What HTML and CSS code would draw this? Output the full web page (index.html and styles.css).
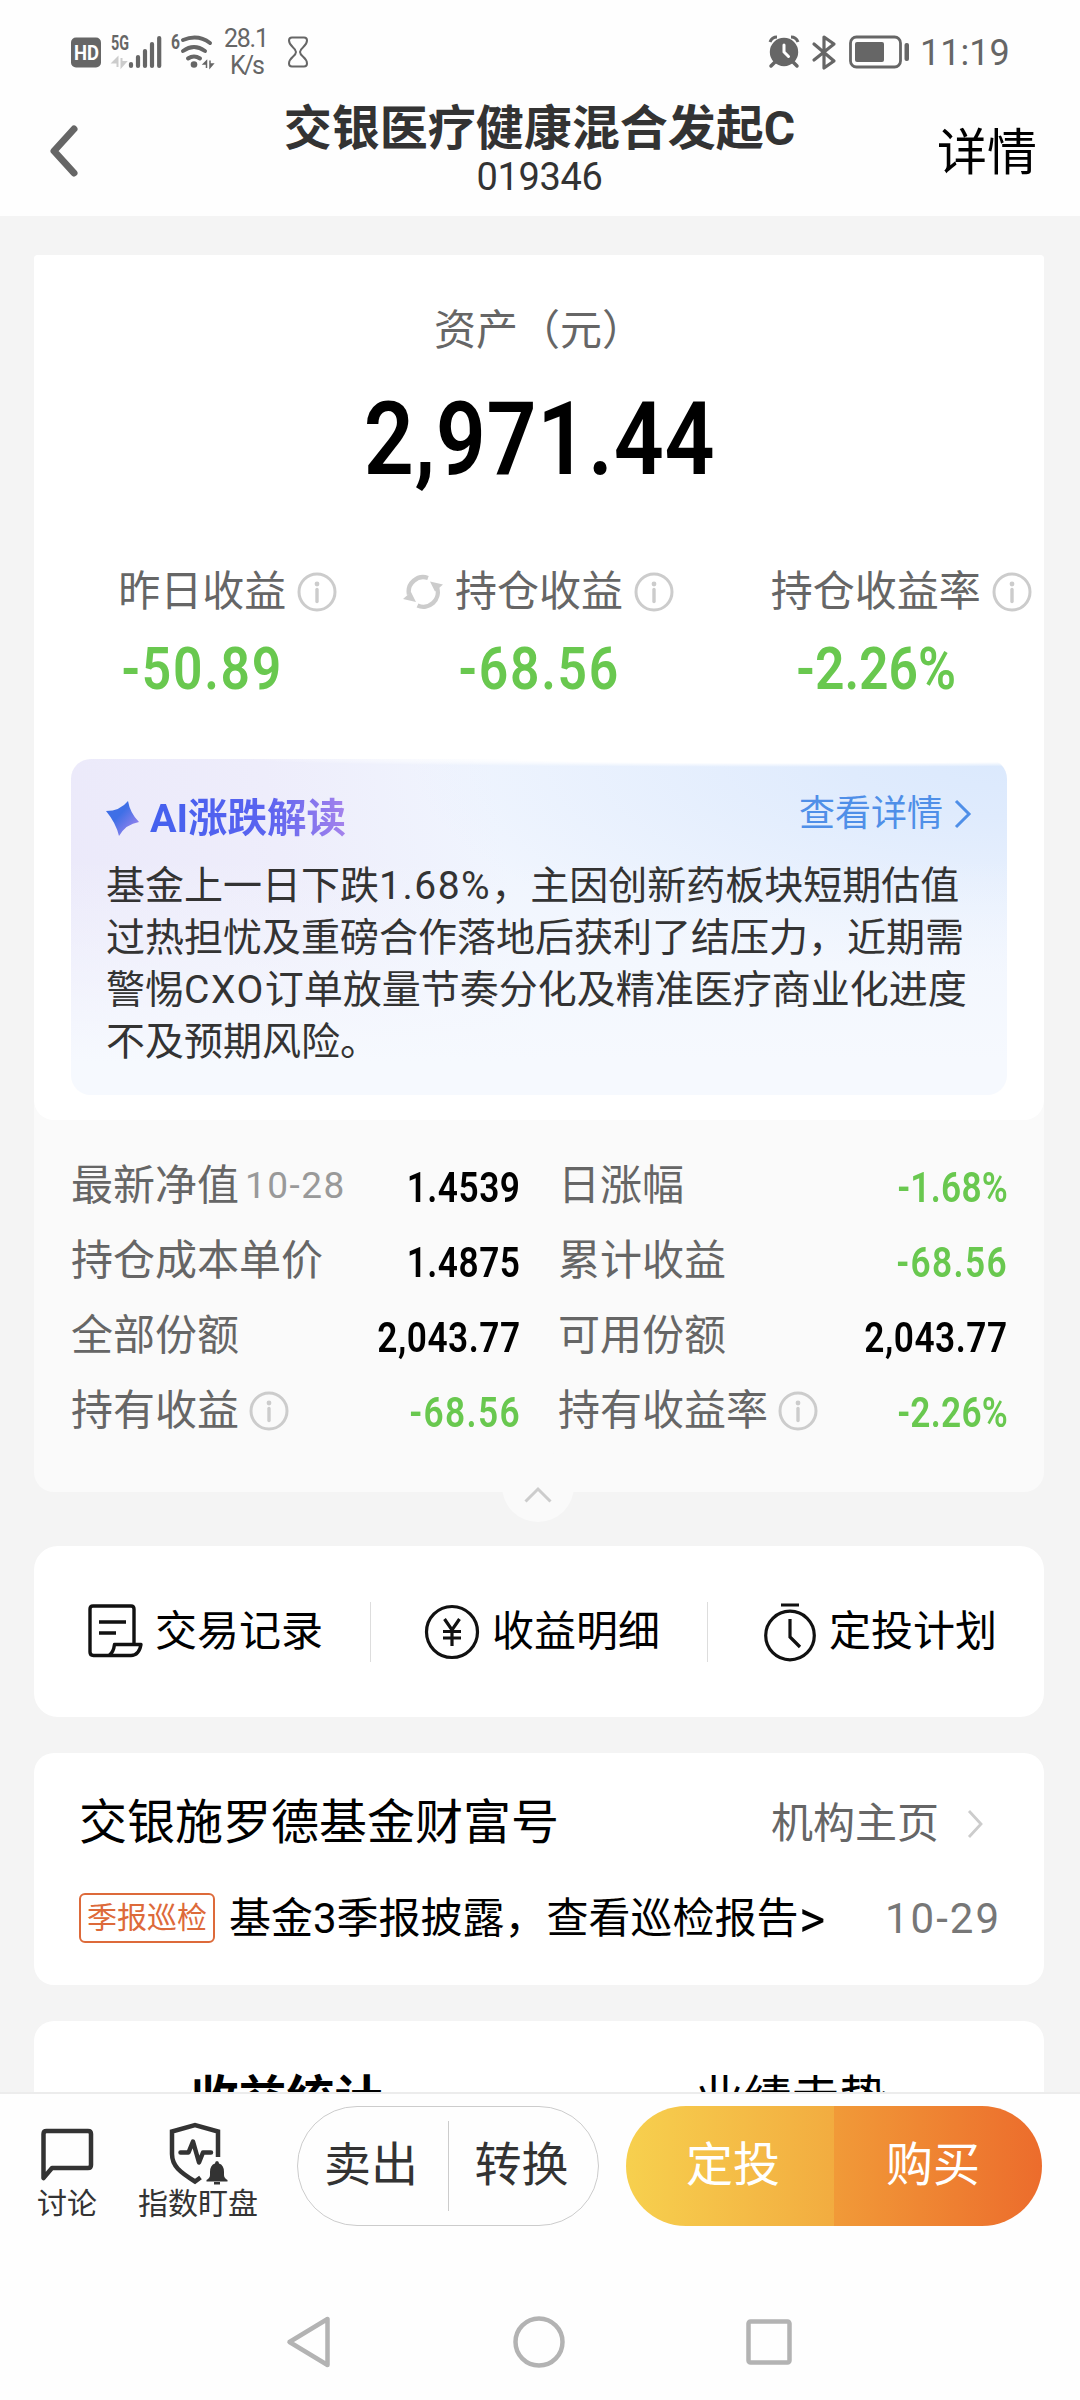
FILE: index.html
```html
<!DOCTYPE html>
<html lang="zh-CN">
<head>
    <meta charset="UTF-8">
    <meta name="viewport" content="width=device-width, initial-scale=1.0">
    <title>交银医疗健康混合发起C</title>
    <link rel="stylesheet" href="styles.css">
</head>
<body>

<svg class="sprite" width="0" height="0">
    <symbol id="info" viewBox="0 0 40 40">
        <circle cx="20" cy="20" r="18" fill="none" stroke="#ccc" stroke-width="3"/>
        <circle cx="20" cy="12" r="2.4" fill="#ccc"/>
        <path d="M20 17.500v12" stroke="#ccc" stroke-width="3.400" stroke-linecap="round"/>
    </symbol>
</svg>

<div class="status">
    <svg class="status-left" width="250" height="52" viewBox="66 28 250 52">
        <rect x="71" y="39.500" width="30" height="30" rx="5" fill="#666"/>
        <text x="74" y="61.500" class="hd" textLength="25" lengthAdjust="spacingAndGlyphs">HD</text>
        <text x="111" y="52" class="net" textLength="18" lengthAdjust="spacingAndGlyphs">5G</text>
        <path d="M117.500 69V60L113 64.500h4M121.500 60v8.500l4-4.500h-4" fill="#ccc" stroke="#ccc" stroke-width="2"/>
        <path d="M131 66v2M138 59v9M145 53v15M152 46v22M159.200 40v28" stroke="#666" stroke-width="4.200" stroke-linecap="round"/>
        <text x="171" y="50.500" class="net" textLength="9" lengthAdjust="spacingAndGlyphs">6</text>
        <path d="M183 42q15-6 27 3M183 53q11-8 22 0M188 60.500q6-4 12 0" fill="none" stroke="#666" stroke-width="4" stroke-linecap="round"/>
        <circle cx="194" cy="66.500" r="3.300" fill="#666"/>
        <path d="M206.500 70v-7l-3 3h3M210 62.500v7l3-3.500h-3" fill="#666" stroke="#666" stroke-width="1.500"/>
        <text x="224" y="49" class="speed" textLength="45">28.1</text>
        <text x="230" y="76" class="speed" textLength="35">K/s</text>
        <path d="M292 39.500h12q3 0 3 3c0 6-7 7-7 11.500s7 5.500 7 11.500q0 3-3 3h-12q-3 0-3-3c0-6 7-7 7-11.500s-7-5.500-7-11.500q0-3 3-3z" fill="none" stroke="#666" stroke-width="2"/>
    </svg>
    <svg class="status-right" width="142" height="40" viewBox="768 34 142 40">
        <circle cx="784" cy="54" r="14.200" fill="#666"/>
        <path d="M770 44q2-5 7-5M798 44q-2-5-7-5" fill="none" stroke="#666" stroke-width="3"/>
        <path d="M775 64l-4 4M793 64l4 4" stroke="#666" stroke-width="3.500" stroke-linecap="round"/>
        <path d="M784 47v7l4.500 4.500" fill="none" stroke="#fff" stroke-width="3" stroke-linecap="round"/>
        <path d="M814 46l20 17-10 7V39l10 7-20 16" fill="none" stroke="#666" stroke-width="3.200" stroke-linecap="round" stroke-linejoin="round"/>
        <rect x="850.500" y="39" width="50" height="30" rx="6" fill="none" stroke="#666" stroke-width="2.800"/>
        <rect x="855" y="44" width="29" height="20" rx="2" fill="#666"/>
        <rect x="904.500" y="45" width="4.500" height="18" rx="2" fill="#666"/>
    </svg>
    <span class="clock">11:19</span>
</div>

<header>
    <svg class="back" width="30" height="54" viewBox="0 0 30 54"><path d="M25 5L5 27 25 49" fill="none" stroke="#666" stroke-width="7" stroke-linecap="round" stroke-linejoin="round"/></svg>
    <div class="title">
        <h1>交银医疗健康混合发起C</h1>
        <p>019346</p>
    </div>
    <a class="more">详情</a>
</header>

<main>
    <section class="asset">
        <div class="asset-top">
            <p class="asset-label">资产（元）</p>
            <p class="asset-total"><span>2,971.44</span></p>
            <div class="profits">
                <div class="profit">
                    <p class="profit-label">昨日收益<svg class="info"><use href="#info"/></svg></p>
                    <p class="profit-num"><span>-50.89</span></p>
                </div>
                <div class="profit">
                    <p class="profit-label">
                        <svg class="refresh" viewBox="0 0 40 36">
                            <path d="M6 20.500A14.500 14.500 0 0 1 25 4M34 13.500A14.500 14.500 0 0 1 14.500 31.500" fill="none" stroke="#ccc" stroke-width="4.400"/>
                            <path d="M0 25l8-7 5 10zM40 10.500l-8 7-5-10z" fill="#ccc"/>
                        </svg>持仓收益<svg class="info"><use href="#info"/></svg></p>
                    <p class="profit-num"><span>-68.56</span></p>
                </div>
                <div class="profit">
                    <p class="profit-label">持仓收益率<svg class="info"><use href="#info"/></svg></p>
                    <p class="profit-num rate"><span>-2.26%</span></p>
                </div>
            </div>
            <div class="ai">
                <div class="ai-head">
                    <svg width="34" height="36" viewBox="0 0 34 36">
                        <defs>
                            <linearGradient id="star" x1="0" y1="0" x2="1" y2="1">
                                <stop offset=".4" stop-color="#3f6fe6"/>
                                <stop offset="1" stop-color="#b58af0"/>
                            </linearGradient>
                        </defs>
                        <path d="M22 0q2 12 11 21-13 2-20 14Q10 22 0 10q14 0 22-10z" fill="url(#star)"/>
                    </svg>
                    <strong>AI涨跌解读</strong>
                    <a>查看详情<svg width="18" height="30" viewBox="0 0 18 30"><path d="M2 2l13 13L2 28" fill="none" stroke="#4f8fe8" stroke-width="3"/></svg></a>
                </div>
                <p class="ai-text">基金上一日下跌<span class="latin">1.68%</span>，主因创新药板块短期估值<br>过热担忧及重磅合作落地后获利了结压力，近期需<br>警惕<span class="latin">CXO</span>订单放量节奏分化及精准医疗商业化进度<br>不及预期风险。</p>
            </div>
        </div>
        <div class="details">
            <div class="detail">最新净值<small>10-28</small><b>1.4539</b></div>
            <div class="detail">日涨幅<b class="down rate">-1.68%</b></div>
            <div class="detail">持仓成本单价<b>1.4875</b></div>
            <div class="detail">累计收益<b class="down">-68.56</b></div>
            <div class="detail">全部份额<b>2,043.77</b></div>
            <div class="detail">可用份额<b>2,043.77</b></div>
            <div class="detail">持有收益<svg class="info"><use href="#info"/></svg><b class="down">-68.56</b></div>
            <div class="detail">持有收益率<svg class="info"><use href="#info"/></svg><b class="down rate">-2.26%</b></div>
        </div>
        <div class="fold"><svg width="28" height="17" viewBox="0 0 28 17"><path d="M1.500 15.500L14 3l12.500 12.500" fill="none" stroke="#ccc" stroke-width="3"/></svg></div>
    </section>

    <section class="links">
        <a>
            <svg width="56" height="60" viewBox="0 0 56 60" fill="none" stroke="#111" stroke-width="3.400" stroke-linejoin="round">
                <path d="M47 42V7q0-3-3-3H6Q3 4 3 7v43q0 3.500 3.500 3.500H44q8 0 10-11H27.500q-1 8-5.500 11M12 20h27M12 31h17"/>
            </svg>交易记录
        </a>
        <a>
            <svg width="56" height="60" viewBox="0 0 56 60" fill="none" stroke="#111" stroke-width="3.200">
                <circle cx="28" cy="30" r="25.500"/>
                <path d="M20.500 17L28 28l7.500-11M28 28v16M19 29.500h18M19 36h18"/>
            </svg>收益明细
        </a>
        <a>
            <svg width="56" height="62" viewBox="0 0 56 62" fill="none" stroke="#111" stroke-width="3.200">
                <circle cx="29" cy="34.500" r="24.300"/>
                <path d="M20 4h18M29 18v18l10 10"/>
            </svg>定投计划
        </a>
    </section>

    <section class="org">
        <div class="org-head">
            <h2>交银施罗德基金财富号</h2>
            <a>机构主页<svg width="18" height="30" viewBox="0 0 18 30"><path d="M3 3l12 13L3 29" fill="none" stroke="#ccc" stroke-width="2.800"/></svg></a>
        </div>
        <div class="org-news">
            <span class="tag">季报巡检</span>
            <p>基金3季报披露，查看巡检报告<span class="gt">&gt;</span></p>
            <time>10-29</time>
        </div>
    </section>

    <section class="tabs">
        <span class="active">收益统计</span>
        <span>业绩走势</span>
    </section>
</main>

<footer>
    <a class="tool chat">
        <svg width="54" height="64" viewBox="0 0 54 64"><path d="M3.500 57V13q0-3 3-3h41.500q3 0 3 3v31q0 3-3 3H12z" fill="none" stroke="#333" stroke-width="4.500" stroke-linejoin="round"/></svg>
        讨论
    </a>
    <a class="tool watch">
        <svg width="60" height="64" viewBox="0 0 60 64" fill="none" stroke="#333" stroke-width="4.500">
            <path d="M50 36V10.500L27 4 4 10.500V33c0 12 8 18 23 27.500l5.500-4"/>
            <path d="M12.500 31.500h8l4.500-11 6 21 4-10h8" stroke-linecap="round" stroke-linejoin="round"/>
            <path d="M38.500 60.500v-1.500q3.500-2 3.500-5v-3q0-7 5-8.500 0-2.500 2-2.500t2 2.500q5 1.500 5 8.500v3q0 3 3.500 5v1.500zM46 61h6v2.500h-6z" fill="#333" stroke="none"/>
        </svg>
        指数盯盘
    </a>
    <div class="pill sell"><a>卖出</a><a>转换</a></div>
    <div class="pill buy"><a>定投</a><a>购买</a></div>
</footer>

<nav>
    <svg width="46" height="54" viewBox="0 0 46 54"><path d="M41.500 4v46L3.500 27z" fill="none" stroke="#b3b3b3" stroke-width="4.500" stroke-linejoin="round"/></svg>
    <svg width="52" height="52" viewBox="0 0 52 52"><circle cx="26" cy="26" r="23.500" fill="none" stroke="#b3b3b3" stroke-width="4.500"/></svg>
    <svg width="46" height="46" viewBox="0 0 46 46"><rect x="2.500" y="2.500" width="41" height="41" rx="2" fill="none" stroke="#b3b3b3" stroke-width="4.500"/></svg>
</nav>

</body>
</html>
```
FILE: styles.css
```css
* {
    box-sizing: border-box;
}
body {
    margin: 0;
    width: 1080px;
    height: 2400px;
    overflow: hidden;
    display: flex;
    flex-direction: column;
    background: #fefefe;
    color: #000;
    font-family: Roboto, "Noto Sans CJK SC", sans-serif;
    font-size: 42px;
    line-height: 1.5;
}
h1, h2, p {
    margin: 0;
    font-weight: normal;
}
svg {
    flex-shrink: 0;
}
.sprite {
    position: absolute;
}

/* status bar */
.status {
    height: 104px;
    padding: 26px 72px 0 66px;
    display: flex;
    color: #666;
}
.status-left {
    overflow: visible;
}
.status-right {
    margin: 6px 10px 0 auto;
}
.hd {
    font: bold 20px Roboto, sans-serif;
    fill: #fff;
}
.net {
    font: bold 20px Roboto, sans-serif;
    fill: #666;
}
.speed {
    font-size: 25px;
    fill: #666;
}
.clock {
    width: 88px;
    font-size: 36px;
    line-height: 54px;
}

/* header */
header {
    height: 112px;
    padding: 0 43px 0 49px;
    display: flex;
    justify-content: space-between;
    align-items: flex-start;
}
.back {
    margin-top: 20px;
}
.title {
    color: #333;
    text-align: center;
    padding-left: 63px;
}
.title h1 {
    font-size: 48px;
    font-weight: bold;
    line-height: 50px;
}
.title p {
    font-size: 38px;
    line-height: 46px;
    letter-spacing: -0.4px;
}
.more {
    font-size: 50px;
    line-height: 98px;
}

main {
    flex: 1;
    overflow: hidden;
    background: #f4f4f4;
    padding: 39px 36px 0 34px;
}

/* asset card */
.asset {
    position: relative;
    height: 1237px;
    background: #fafafa;
    border-radius: 4px 4px 20px 20px;
}
.asset-top {
    height: 865px;
    padding: 46px 37px 0;
    background: #fff;
    border-radius: 4px 4px 20px 20px;
}
.asset-label {
    text-align: center;
    color: #666;
    line-height: 60px;
}
.asset-total {
    margin-top: 18px;
    text-align: center;
    font-size: 102px;
    font-weight: 600;
    line-height: 120px;
    letter-spacing: 0.8px;
}
.asset-total span, .profit-num span {
    display: inline-block;
    transform: scaleX(0.86);
}
.profits {
    margin: 63px -37px 0;
    display: flex;
}
.profit {
    flex: 1;
    display: flex;
    flex-direction: column;
    align-items: center;
}
.profit-label {
    position: relative;
    color: #666;
    line-height: 60px;
}
.info {
    width: 40px;
    height: 40px;
}
.profit-label .info {
    position: absolute;
    left: calc(100% + 11px);
    top: 10px;
}
.refresh {
    position: absolute;
    right: calc(100% + 12px);
    top: 12px;
    width: 40px;
    height: 36px;
}
.profit-num {
    margin-top: 12px;
    color: #69c84f;
    font-size: 60px;
    font-weight: 600;
    line-height: 70px;
    letter-spacing: 2px;
}
.profit-num.rate {
    letter-spacing: 0;
}

/* AI box */
.ai {
    margin-top: 55px;
    height: 336px;
    padding: 30px 35px 0 35px;
    border-radius: 20px;
    background:
        radial-gradient(ellipse 60% 8px at 78% 0, #fff 50%, rgba(255, 255, 255, 0) 100%),
        linear-gradient(to bottom, rgba(247, 250, 255, 0) 30%, #f6f9fe 90%),
        radial-gradient(ellipse at 100% 0, #dbe9fd 0%, #dfebfd 12%, rgba(240, 245, 254, 0) 45%),
        linear-gradient(80deg, #ebe9fa 0%, #eeedfb 25%, #f0f5fe 48%, #f0f5fe 100%);
}
.ai-head {
    display: flex;
    align-items: center;
    height: 60px;
}
.ai-head strong {
    margin-left: 10px;
    font-size: 39.500px;
    background: linear-gradient(to right, #4460ee 0%, #5a63f0 60%, #a583ec 100%);
    -webkit-background-clip: text;
    background-clip: text;
    color: transparent;
}
.ai-head a {
    margin-left: auto;
    display: flex;
    align-items: center;
    gap: 11px;
    font-size: 36px;
    color: #4f8fe8;
    position: relative;
    top: -5px;
}
.ai-text {
    margin-top: 11px;
    font-size: 39px;
    line-height: 52px;
    color: #333;
    white-space: nowrap;
}
.latin {
    letter-spacing: 1.5px;
}

/* details */
.details {
    padding: 28px 36px 0 37px;
    display: grid;
    grid-template-columns: 450px 450px;
    column-gap: 37px;
}
.detail {
    display: flex;
    align-items: center;
    height: 75px;
    color: #666;
    white-space: nowrap;
}
.detail small {
    margin-left: 6px;
    font-size: 37px;
    letter-spacing: 1.5px;
    color: #999;
}
.detail .info {
    margin-left: 10px;
}
.detail b {
    margin-left: auto;
    padding-top: 3px;
    font-weight: 600;
    letter-spacing: 0.6px;
    color: #000;
    transform: scaleX(0.84);
    transform-origin: right;
}
.detail .down {
    color: #69c84f;
    letter-spacing: 1.6px;
}
.detail .rate {
    letter-spacing: 0.3px;
}
.fold {
    position: absolute;
    left: 468px;
    bottom: -30px;
    width: 72px;
    height: 72px;
    border-radius: 50%;
    background: #fafafa;
    display: flex;
    justify-content: center;
    padding-top: 36px;
}

/* quick links */
.links {
    margin-top: 54px;
    height: 171px;
    border-radius: 24px;
    background: #fff;
    display: flex;
    align-items: center;
}
.links a {
    flex: 1;
    height: 60px;
    display: flex;
    align-items: center;
    justify-content: center;
    gap: 12px;
    padding-left: 6px;
}
.links a + a {
    border-left: 1px solid #ddd;
}

/* fund company */
.org {
    margin-top: 36px;
    height: 232px;
    padding: 34px 45px 0 45px;
    border-radius: 20px;
    background: #fff;
}
.org-head, .org-news {
    display: flex;
    align-items: center;
}
.org-head {
    height: 72px;
}
.org-head h2 {
    font-size: 48px;
}
.org-head a {
    margin-left: auto;
    margin-right: 15px;
    display: flex;
    align-items: center;
    gap: 27px;
    color: #666;
}
.org-news {
    margin-top: 24px;
    height: 70px;
    white-space: nowrap;
}
.tag {
    width: 136px;
    height: 50px;
    border: 2px solid #dd6a3a;
    border-radius: 6px;
    color: #dd6a3a;
    font-size: 30px;
    line-height: 46px;
    text-align: center;
}
.org-news p {
    margin-left: 14px;
}
.gt {
    display: inline-block;
    transform: scale(1.2, 1.25);
    transform-origin: left center;
}
.org-news time {
    margin-left: auto;
    letter-spacing: 2px;
    margin-right: -2px;
    color: #777;
}

/* tabs */
.tabs {
    margin-top: 36px;
    height: 300px;
    padding-top: 43px;
    border-radius: 20px;
    background: #fff;
    display: flex;
}
.tabs span {
    flex: 1;
    text-align: center;
    font-size: 48px;
    line-height: 70px;
}
.tabs .active {
    font-weight: bold;
}

/* bottom bar */
footer {
    height: 166px;
    padding: 12px 38px 0 36px;
    border-top: 2px solid #ececec;
    display: flex;
    color: #333;
}
.tool {
    display: flex;
    flex-direction: column;
    align-items: center;
    padding-top: 15px;
    font-size: 30px;
    line-height: 38px;
}
.chat {
    width: 62px;
}
.watch {
    width: 120px;
    margin-left: 40px;
}
.pill {
    height: 120px;
    border-radius: 60px;
    display: flex;
    align-items: center;
    overflow: hidden;
    font-size: 47px;
}
.pill a {
    width: 50%;
    text-align: center;
}
.sell {
    width: 302px;
    margin-left: 39px;
    border: 1.5px solid #ccc;
}
.sell a {
    height: 90px;
    padding-right: 4px;
    line-height: 88px;
}
.sell a + a {
    border-left: 1px solid #ccc;
}
.buy {
    width: 416px;
    margin-left: auto;
    color: #fff;
    line-height: 118px;
}
.buy a {
    height: 120px;
    padding-left: 6px;
    background: linear-gradient(to right, #f7d04e, #f2ac40);
}
.buy a + a {
    padding: 0 10px 0 0;
    background: linear-gradient(to right, #f19a38, #ec6c2c);
}

/* system keys */
nav {
    height: 142px;
    padding: 26px 288px 0 286px;
    display: flex;
    justify-content: space-between;
    align-items: center;
}
```
